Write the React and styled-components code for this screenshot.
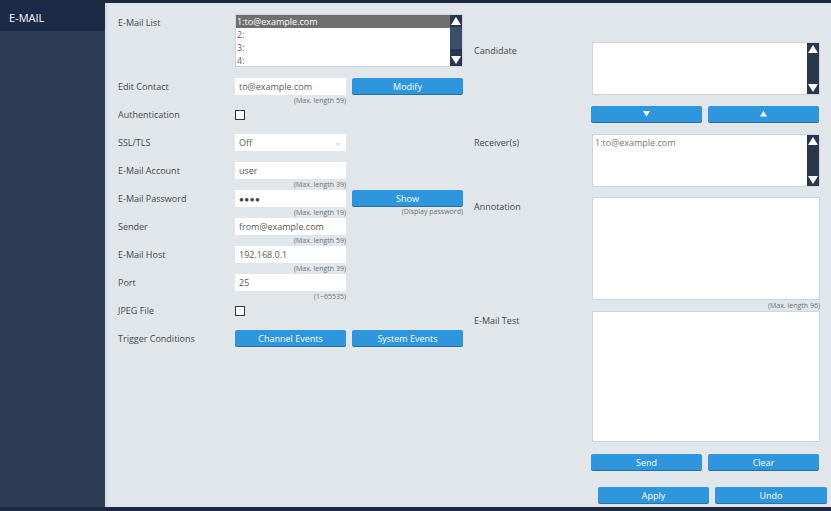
import styled, { createGlobalStyle } from "styled-components";

const GlobalStyle = createGlobalStyle`
  html, body {
    margin: 0;
    padding: 0;
  }
  body {
    font-family: "Open Sans", "Noto Sans", "Liberation Sans", sans-serif;
    background: #e1e6eb;
  }
  * {
    box-sizing: border-box;
  }
`;

const Frame = styled.div`
  width: 831px;
  height: 511px;
  display: flex;
  flex-direction: column;
  border-top: 3px solid #1d2940;
  border-bottom: 4px solid #1d2940;
  overflow: hidden;
`;

const Body = styled.div`
  flex: 1;
  display: flex;
  min-height: 0;
`;

const Sidebar = styled.div`
  width: 105px;
  background: #2d3c55;
  display: flex;
  flex-direction: column;
`;

const Tab = styled.div`
  height: 28px;
  background: #1b2a47;
  color: #fff;
  font-size: 11px;
  display: flex;
  align-items: center;
  padding-left: 9px;
`;

const Content = styled.div`
  flex: 1;
  background: #e1e6eb;
  border-left: 3px solid #d5dce5;
  padding: 11px 4px 0 10px;
  display: flex;
  flex-direction: column;
`;

const Columns = styled.div`
  display: flex;
  gap: 11px;
`;

const Column = styled.div`
  width: ${(p) => p.$width}px;
  padding-top: ${(p) => p.$top || 0}px;
  display: flex;
  flex-direction: column;
`;

const Row = styled.div`
  display: flex;
  height: ${(p) => p.$height}px;
  margin-top: ${(p) => p.$gap || 0}px;
  flex-shrink: 0;
`;

const Label = styled.div`
  width: ${(p) => p.$width || 117}px;
  flex-shrink: 0;
  font-size: 9px;
  line-height: 17px;
  color: #474747;
  padding-top: ${(p) => p.$offset || 0}px;
`;

const Controls = styled.div`
  display: flex;
  gap: 6px;
  align-items: flex-start;
`;

const Field = styled.div`
  width: ${(p) => p.$width || 111}px;
  display: flex;
  flex-direction: column;
`;

const Input = styled.div`
  height: 17px;
  background: #fff;
  font-size: 9px;
  line-height: 17px;
  color: #5a5a5a;
  padding-left: 4px;
  position: relative;
`;

const Dots = styled.span`
  font-size: 8px;
  letter-spacing: 0.5px;
  color: #444;
`;

const Chevron = styled.span`
  position: absolute;
  right: 4px;
  top: -1px;
  color: #c4c9cf;
  font-size: 9px;
`;

const Hint = styled.div`
  font-size: 7px;
  line-height: 11px;
  color: #707070;
  text-align: right;
  white-space: nowrap;
`;

const Button = styled.button`
  width: ${(p) => p.$width || 111}px;
  height: 16px;
  border: none;
  border-radius: 2px;
  background: #2e96dc;
  box-shadow: 0 1px 0 #2a6ea3;
  color: #fff;
  font-family: inherit;
  font-size: 9px;
  padding: 0;
  display: flex;
  align-items: center;
  justify-content: center;
`;

const Checkbox = styled.div`
  width: 10px;
  height: 10px;
  border: 1px solid #333;
  background: #fff;
  margin-top: 4px;
`;

const Box = styled.div`
  width: 228px;
  height: ${(p) => p.$height}px;
  background: #fff;
  border: 1px solid #cfd5dd;
  display: flex;
`;

const BoxItems = styled.div`
  flex: 1;
  display: flex;
  flex-direction: column;
`;

const Item = styled.div`
  height: 13px;
  line-height: 13px;
  font-size: 9px;
  padding-left: 1px;
  color: ${(p) => (p.$selected ? "#fff" : "#666")};
  background: ${(p) => (p.$selected ? "#6f6f6f" : "transparent")};
`;

const ReceiverText = styled.div`
  font-size: 9px;
  color: #777;
  padding: 1px 0 0 2px;
`;

const Scrollbar = styled.div`
  width: 12px;
  background: #2a364c;
  display: flex;
  flex-direction: column;
  justify-content: space-between;
`;

const ScrollTrack = styled.div`
  flex: 1;
  display: flex;
  flex-direction: column;
`;

const Thumb = styled.div`
  height: ${(p) => p.$size}px;
  background: #3c4d6a;
`;

const ArrowBox = styled.div`
  height: 12px;
  display: flex;
  align-items: center;
  justify-content: center;
`;

const Footer = styled.div`
  display: flex;
  justify-content: flex-end;
  gap: 6px;
  margin-top: 16px;
`;

const Tri = ({ up, size = 8 }) => (
  <svg width={size} height={size * 0.8} viewBox="0 0 10 8">
    {up ? <polygon points="5,0 10,8 0,8" fill="#fff" /> : <polygon points="0,0 10,0 5,8" fill="#fff" />}
  </svg>
);

const Scroll = ({ thumb = 0 }) => (
  <Scrollbar>
    <ArrowBox>
      <Tri up size={10} />
    </ArrowBox>
    <ScrollTrack>{thumb > 0 && <Thumb $size={thumb} />}</ScrollTrack>
    <ArrowBox>
      <Tri size={10} />
    </ArrowBox>
  </Scrollbar>
);

const TextRow = ({ label, value, hint, children }) => (
  <Row $height={28}>
    <Label>{label}</Label>
    <Controls>
      <Field>
        <Input>{value}</Input>
        {hint && <Hint>{hint}</Hint>}
      </Field>
      {children}
    </Controls>
  </Row>
);

export default function App() {
  return (
    <>
      <GlobalStyle />
      <Frame>
        <Body>
          <Sidebar>
            <Tab>E-MAIL</Tab>
          </Sidebar>
          <Content>
            <Columns>
              <Column $width={345}>
                <Row $height={64}>
                  <Label>E-Mail List</Label>
                  <Box $height={53}>
                    <BoxItems>
                      <Item $selected>1:to@example.com</Item>
                      <Item>2:</Item>
                      <Item>3:</Item>
                      <Item>4:</Item>
                    </BoxItems>
                    <Scroll thumb={22} />
                  </Box>
                </Row>
                <TextRow label="Edit Contact" value="to@example.com" hint="(Max. length 59)">
                  <Button>Modify</Button>
                </TextRow>
                <Row $height={28}>
                  <Label>Authentication</Label>
                  <Checkbox />
                </Row>
                <Row $height={28}>
                  <Label>SSL/TLS</Label>
                  <Field>
                    <Input>
                      Off
                      <Chevron>⌄</Chevron>
                    </Input>
                  </Field>
                </Row>
                <TextRow label="E-Mail Account" value="user" hint="(Max. length 39)" />
                <Row $height={28}>
                  <Label>E-Mail Password</Label>
                  <Controls>
                    <Field>
                      <Input>
                        <Dots>●●●●</Dots>
                      </Input>
                      <Hint>(Max. length 19)</Hint>
                    </Field>
                    <Field>
                      <Button>Show</Button>
                      <Hint>(Display password)</Hint>
                    </Field>
                  </Controls>
                </Row>
                <TextRow label="Sender" value="from@example.com" hint="(Max. length 59)" />
                <TextRow label="E-Mail Host" value="192.168.0.1" hint="(Max. length 39)" />
                <TextRow label="Port" value="25" hint="(1~65535)" />
                <Row $height={28}>
                  <Label>JPEG File</Label>
                  <Checkbox />
                </Row>
                <Row $height={28}>
                  <Label>Trigger Conditions</Label>
                  <Controls>
                    <Button>Channel Events</Button>
                    <Button>System Events</Button>
                  </Controls>
                </Row>
              </Column>
              <Column $width={346} $top={28}>
                <Row $height={53}>
                  <Label $width={118}>Candidate</Label>
                  <Box $height={53}>
                    <BoxItems />
                    <Scroll />
                  </Box>
                </Row>
                <Row $height={17} $gap={11}>
                  <Label $width={117} />
                  <Controls>
                    <Button>
                      <Tri size={7} />
                    </Button>
                    <Button>
                      <Tri up size={7} />
                    </Button>
                  </Controls>
                </Row>
                <Row $height={53} $gap={11}>
                  <Label $width={118}>Receiver(s)</Label>
                  <Box $height={53}>
                    <BoxItems>
                      <ReceiverText>1:to@example.com</ReceiverText>
                    </BoxItems>
                    <Scroll />
                  </Box>
                </Row>
                <Row $height={103} $gap={10}>
                  <Label $width={118} $offset={1}>Annotation</Label>
                  <Box $height={103} />
                </Row>
                <Hint>(Max. length 96)</Hint>
                <Row $height={131}>
                  <Label $width={118} $offset={1}>E-Mail Test</Label>
                  <Box $height={131} />
                </Row>
                <Row $height={17} $gap={12}>
                  <Label $width={117} />
                  <Controls>
                    <Button>Send</Button>
                    <Button>Clear</Button>
                  </Controls>
                </Row>
              </Column>
            </Columns>
            <Footer>
              <Button $width={111}>Apply</Button>
              <Button $width={112}>Undo</Button>
            </Footer>
          </Content>
        </Body>
      </Frame>
    </>
  );
}
